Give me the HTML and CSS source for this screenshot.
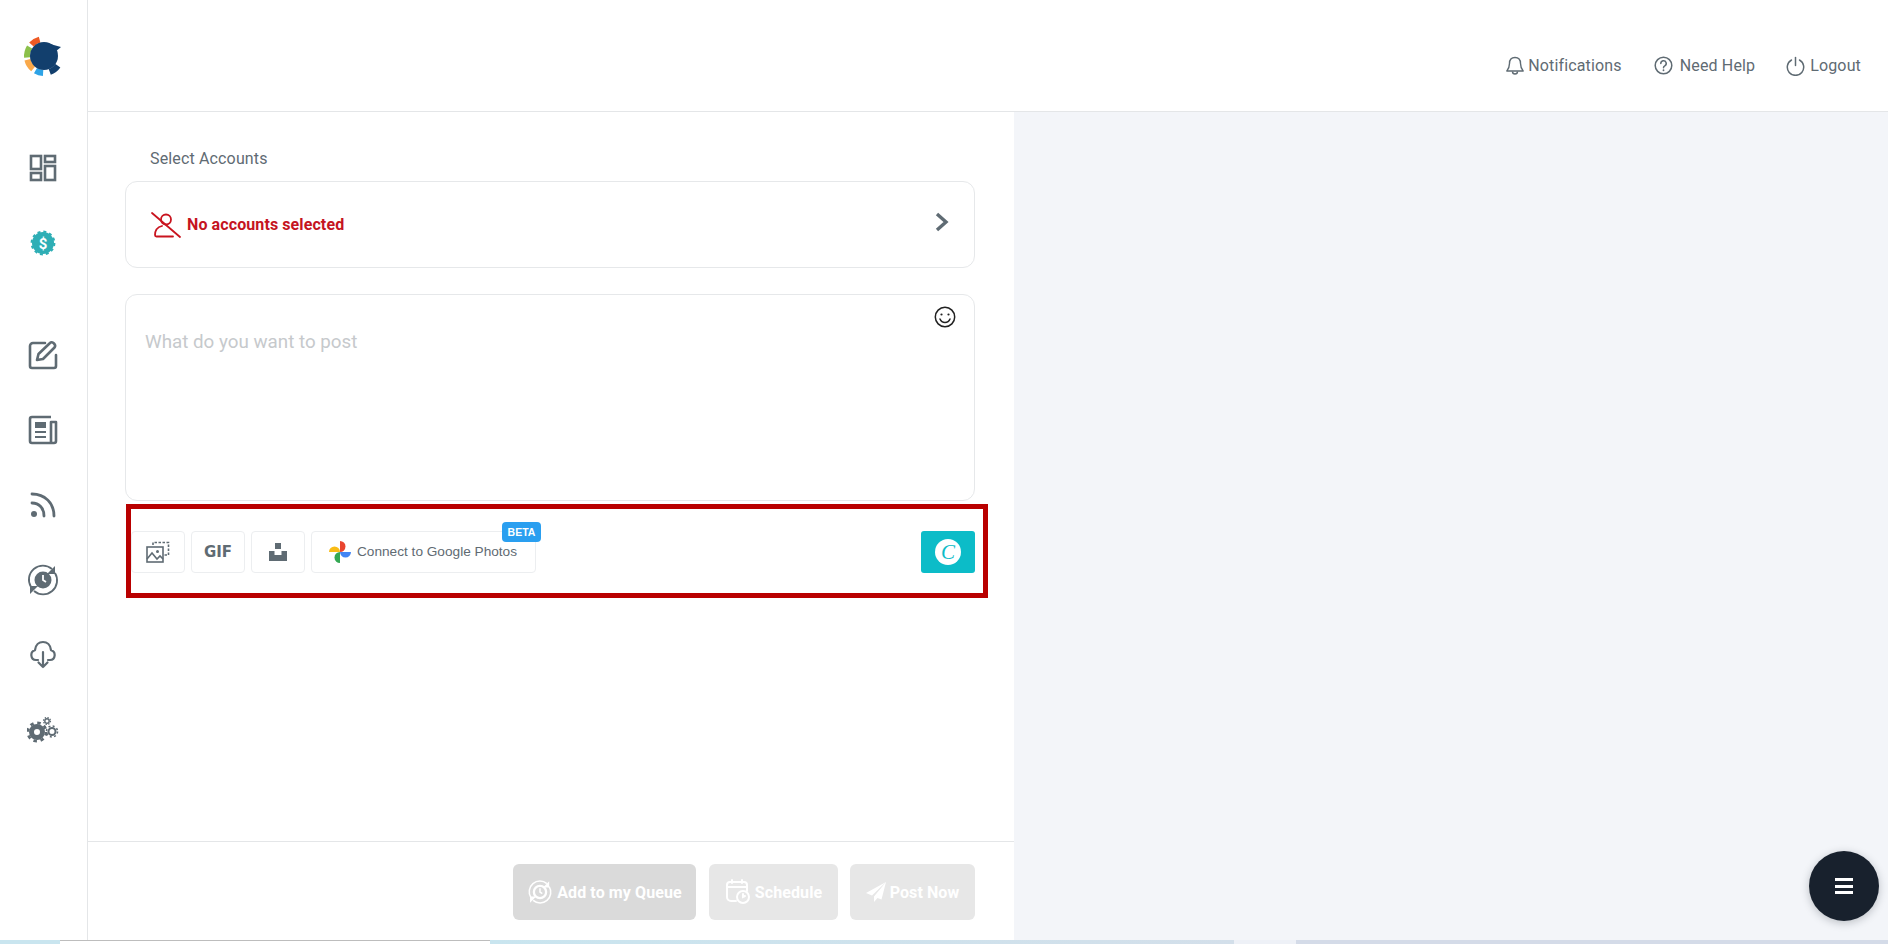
FILE: index.html
```html
<!DOCTYPE html>
<html lang="en">
<head>
<meta charset="utf-8">
<title>Composer</title>
<link rel="stylesheet" href="styles.css">
</head>
<body>
<div class="app">
  <aside class="sidebar">
    <div class="logo">
      <svg width="40" height="44" viewBox="0 0 40 44" fill="none" stroke-width="6">
        <path d="M9.400 10.600A17 17 0 0 1 17.600 5.600" stroke="#ee5a24"/>
        <path d="M7.600 13A17 17 0 0 0 5.100 23.500" stroke="#8cc04a"/>
        <path d="M5.400 25.800A17 17 0 0 0 11.100 35" stroke="#f9a94a"/>
        <path d="M13.500 36.700A17 17 0 0 0 21.100 39" stroke="#2ea3e6"/>
        <path d="M27.800 38A17 17 0 0 0 35.900 31.800" stroke="#123f6d"/>
        <circle cx="22" cy="22" r="14" fill="#123f6d"/>
        <path d="M28 10L39 13L33 18Z" fill="#123f6d"/>
      </svg>
    </div>
    <nav class="nav nav-top">
      <a class="nav-item">
        <svg width="28" height="28" viewBox="0 0 28 28" fill="none" stroke="#5f6b73" stroke-width="2.600"><rect x="2" y="2" width="10" height="13"/><rect x="16" y="2" width="10" height="6"/><rect x="2" y="19" width="10" height="7"/><rect x="16" y="12" width="10" height="14"/></svg>
      </a>
      <a class="nav-item">
        <svg width="26" height="26" viewBox="0 0 26 26"><circle cx="13" cy="13" r="11" fill="#2eaeb5"/><circle cx="13" cy="13" r="11.400" fill="none" stroke="#2eaeb5" stroke-width="2" stroke-dasharray="3 2.970"/><text class="badge-dollar" x="13" y="18.500" text-anchor="middle">$</text></svg>
      </a>
    </nav>
    <nav class="nav nav-bottom">
      <a class="nav-item">
        <svg width="30" height="30" viewBox="0 0 30 30" fill="none" stroke="#5f6b73" stroke-width="2.600" stroke-linecap="round" stroke-linejoin="round"><path d="M17 3H5a3 3 0 0 0-3 3v20a2 2 0 0 0 2 2h22a2 2 0 0 0 2-2V15"/><path d="M9 20l1.500-6L22 3c1-1 2.500-1 4 .5s1.500 3 .5 4L15 19z"/></svg>
      </a>
      <a class="nav-item">
        <svg width="30" height="30" viewBox="0 0 30 30" fill="none" stroke="#5f6b73" stroke-width="2.600" stroke-linejoin="round"><path d="M23 2H4a2 2 0 0 0-2 2v22a2 2 0 0 0 2 2h22a2 2 0 0 0 2-2V7h-5v21"/><rect x="7" y="7" width="11" height="6" fill="#5f6b73" stroke="none"/><path d="M7 17h11M7 22h11" stroke-width="2.200"/></svg>
      </a>
      <a class="nav-item">
        <svg width="28" height="28" viewBox="0 0 28 28" fill="none" stroke="#5f6b73" stroke-width="2.800" stroke-linecap="round"><circle cx="5" cy="23" r="3" fill="#5f6b73" stroke="none"/><path d="M3 12c7 0 12 5 12 13"/><path d="M3 3c13 0 22 9 22 22"/></svg>
      </a>
      <a class="nav-item">
        <svg width="32" height="34" viewBox="0 0 32 34" fill="none" stroke="#5f6b73" stroke-width="1.800"><path d="M4 24A14 14 0 0 1 25 6"/><path d="M28 10A14 14 0 0 1 7 28"/><path d="M28 3v8h-8zM3 31v-8h8z" fill="#5f6b73" stroke="none"/><circle cx="16" cy="17" r="8.500" fill="#5f6b73" stroke="none"/><path d="M16 12v5l3 2" stroke="#fff" stroke-width="1.800"/></svg>
      </a>
      <a class="nav-item">
        <svg width="26" height="30" viewBox="0 0 26 30" fill="none" stroke="#5f6b73" stroke-width="2.200" stroke-linecap="round" stroke-linejoin="round"><path d="M8 20H6a5 5 0 0 1-1-9.800C5.500 5 9 2 13 2s7.500 3 8 8.200A5 5 0 0 1 20 20h-2"/><path d="M13 12v15M8.500 22.500L13 27l4.500-4.500"/></svg>
      </a>
      <a class="nav-item">
        <svg width="32" height="26" viewBox="0 0 32 26" fill="none" stroke="#5f6b73"><circle cx="10" cy="15" r="5.500" stroke-width="5"/><circle cx="10" cy="15" r="9.200" stroke-width="2.800" stroke-dasharray="3.500 3.720"/><circle cx="25" cy="14.500" r="3.500" stroke-width="2"/><circle cx="25" cy="14.500" r="5.500" stroke-width="1.600" stroke-dasharray="2 2.320"/><circle cx="20" cy="4" r="2.200" stroke-width="1.400"/><circle cx="20" cy="4" r="3.500" stroke-width="1.200" stroke-dasharray="1.400 1.350"/></svg>
      </a>
    </nav>
  </aside>
  <div class="main">
    <header class="topbar">
      <a class="top-link top-notify">
        <svg width="18" height="20" viewBox="0 0 18 20" fill="none" stroke="#5f6b73" stroke-width="1.400" stroke-linejoin="round"><path d="M9 1.500c-3.500 0-5.500 2.600-5.500 6 0 4-1.200 5.500-2.700 7.500h16.400c-1.500-2-2.700-3.500-2.700-7.500 0-3.400-2-6-5.500-6z"/><path d="M6.500 15.500a2.500 2.500 0 0 0 5 0"/></svg>
        <span>Notifications</span>
      </a>
      <a class="top-link top-help">
        <svg width="19" height="19" viewBox="0 0 19 19" fill="none" stroke="#5f6b73" stroke-width="1.500" stroke-linecap="round"><circle cx="9.500" cy="9.500" r="8.300"/><path d="M6.800 7.500a2.700 2.700 0 1 1 4 2.300c-.9.500-1.300 1-1.300 1.900"/><path d="M9.500 14.200v.1" stroke-width="1.800"/></svg>
        <span>Need Help</span>
      </a>
      <a class="top-link top-logout">
        <svg width="19" height="20" viewBox="0 0 19 20" fill="none" stroke="#5f6b73" stroke-width="1.500" stroke-linecap="round"><path d="M5.500 4a8.200 8.200 0 1 0 8 0"/><path d="M9.500 1.500v8"/></svg>
        <span>Logout</span>
      </a>
    </header>
    <div class="workspace">
      <section class="editor">
        <div class="editor-body">
          <div class="field-label">Select Accounts</div>
          <div class="accounts-card">
            <svg class="no-user" width="30" height="26" viewBox="0 0 30 26" fill="none" stroke="#c9141f" stroke-width="1.800" stroke-linecap="round"><path d="M1 1l28 24"/><circle cx="15" cy="7.500" r="5"/><path d="M11 14c-4 1-7 4-7 9 0 1 .5 1.500 1.500 1.500H22"/></svg>
            <span class="no-accounts">No accounts selected</span>
            <svg class="chevron" width="14" height="20" viewBox="0 0 14 20" fill="none" stroke="#5f6b73" stroke-width="3.400"><path d="M2 2l9 8-9 8"/></svg>
          </div>
          <div class="composer">
            <div class="placeholder">What do you want to post</div>
            <svg class="smiley" width="22" height="22" viewBox="0 0 22 22" fill="none" stroke="#222" stroke-width="1.500" stroke-linecap="round"><circle cx="11" cy="11" r="9.700"/><circle cx="7.500" cy="8.500" r="1.100" fill="#222" stroke="none"/><circle cx="14.500" cy="8.500" r="1.100" fill="#222" stroke="none"/><path d="M6 13c1 2.500 3 3.500 5 3.500s4-1 5-3.500"/></svg>
          </div>
          <div class="toolbar">
            <button class="tool tool-square">
              <svg width="24" height="22" viewBox="0 0 24 22" fill="none" stroke="#5f6b73" stroke-width="1.600"><path d="M7 4V1.500h15.500V14H18" stroke-dasharray="2.500 1.500"/><rect x="1" y="6" width="16" height="15"/><circle cx="11.500" cy="10.500" r="1.500" fill="#5f6b73" stroke="none"/><path d="M1 18l5-6 5 6 3-3 3 3"/></svg>
            </button>
            <button class="tool tool-square"><span class="gif">GIF</span></button>
            <button class="tool tool-square">
              <svg width="18" height="18" viewBox="0 0 18 18" fill="#5f6b73"><path d="M6 0h6v6H6zM0 8h5.500v4h7V8H18v10H0z"/></svg>
            </button>
            <button class="tool tool-google">
              <svg width="22" height="22" viewBox="0 0 22 22"><path d="M0 11A5.500 5.500 0 0 1 11 11Z" fill="#f9bc15"/><path d="M11 0A5.500 5.500 0 0 1 11 11Z" fill="#e9452f"/><path d="M22 11A5.500 5.500 0 0 1 11 11Z" fill="#4285f4"/><path d="M11 22A5.500 5.500 0 0 1 11 11Z" fill="#34a853"/></svg>
              <span class="google-label">Connect to Google Photos</span>
              <span class="beta">BETA</span>
            </button>
            <button class="canva"><span class="canva-dot">C</span></button>
          </div>
          <div class="annotation"></div>
        </div>
        <footer class="actions">
          <button class="action action-primary">
            <svg width="26" height="26" viewBox="0 0 32 34" fill="none" stroke="#fff" stroke-width="2"><path d="M4 24A14 14 0 0 1 25 6"/><path d="M28 10A14 14 0 0 1 7 28"/><path d="M28 3v8h-8zM3 31v-8h8z" fill="#fff" stroke="none"/><circle cx="16" cy="17" r="8" stroke-width="3"/><path d="M16 12v5l3 2"/></svg>
            <span>Add to my Queue</span>
          </button>
          <button class="action action-schedule">
            <svg width="26" height="26" viewBox="0 0 26 26" fill="none" stroke="#fff" stroke-width="2" stroke-linecap="round"><path d="M11 22H6a4 4 0 0 1-4-4V6a3 3 0 0 1 3-3h14a3 3 0 0 1 3 3v6"/><path d="M2 8h20M7 1v3M17 1v3"/><circle cx="18" cy="18" r="6"/><path d="M18 15v3l2-1"/></svg>
            <span>Schedule</span>
          </button>
          <button class="action action-post">
            <svg width="20" height="20" viewBox="0 0 20 20" fill="#fff"><path d="M20 0L0 11l6 2.500zM20 0L8 14.500V20l3.500-4 4 1.500z"/></svg>
            <span>Post Now</span>
          </button>
        </footer>
      </section>
      <section class="preview"></section>
    </div>
  </div>
</div>
<div class="strip">
  <div class="strip-a"></div>
  <div class="strip-b"></div>
  <div class="strip-c"></div>
  <div class="strip-d"></div>
  <div class="strip-e"></div>
</div>
<button class="fab" aria-label="Menu"><span class="fab-lines"></span></button>
</body>
</html>
```

FILE: styles.css
```css
* { box-sizing: border-box; }
html, body { margin: 0; height: 100%; }
body {
  width: 1888px;
  height: 944px;
  overflow: hidden;
  display: flex;
  flex-direction: column;
  position: relative;
  background: #fff;
  font-family: Roboto, "Liberation Sans", sans-serif;
  color: #5f6b73;
}
svg { display: block; flex: none; }
button { font-family: inherit; cursor: pointer; }

.app { display: flex; height: 940px; }

.sidebar {
  width: 88px;
  flex: none;
  border-right: 1px solid #e4e6e8;
  padding-right: 1px;
  display: flex;
  flex-direction: column;
  align-items: center;
}
.logo { height: 111px; display: flex; align-items: center; justify-content: center; width: 100%; padding-right: 2px; }
.nav { display: flex; flex-direction: column; width: 100%; }
.nav-top { margin-top: 19.500px; }
.nav-bottom { margin-top: 37px; }
.nav-item { height: 75px; display: flex; align-items: center; justify-content: center; }
.badge-dollar { font: 700 15px Roboto, sans-serif; fill: #fff; }

.main { flex: 1; display: flex; flex-direction: column; min-width: 0; }

.topbar {
  height: 112px;
  flex: none;
  border-bottom: 1px solid #e4e6e8;
  display: flex;
  align-items: center;
  justify-content: flex-end;
  padding: 20px 27px 0 0;
}
.top-link { display: flex; align-items: center; font-size: 16px; line-height: 20px; letter-spacing: 0.150px; }
.top-notify { gap: 4px; }
.top-help { gap: 7px; margin-left: 32px; }
.top-logout { gap: 5px; margin-left: 31px; }

.workspace { flex: 1; display: flex; min-height: 0; }

.editor { width: 926px; flex: none; display: flex; flex-direction: column; }
.editor-body { flex: 1; position: relative; padding: 35px 39px 0 37px; }

.field-label { height: 24px; line-height: 24px; margin-left: 25px; font-size: 16px; letter-spacing: 0.150px; }

.accounts-card {
  margin-top: 10px;
  height: 87px;
  border: 1px solid #e6e8ea;
  border-radius: 12px;
  display: flex;
  align-items: center;
  padding: 0 25px 0 25px;
}
.no-accounts { margin-left: 6px; font-size: 16px; font-weight: 700; letter-spacing: 0.100px; color: #c5141f; }
.chevron { margin-left: auto; margin-top: -6px; }

.composer {
  margin-top: 26px;
  height: 207px;
  border: 1px solid #e6e8ea;
  border-radius: 12px;
  padding: 35px 18px 0 19px;
  display: flex;
  justify-content: space-between;
  align-items: flex-start;
}
.placeholder { font-size: 18.800px; line-height: 24px; color: #c6c9cc; }
.smiley { margin-top: -24px; }

.toolbar { margin-top: 30px; margin-left: 6px; height: 42px; display: flex; gap: 6px; }
.tool {
  height: 42px;
  padding: 0;
  background: #fff;
  border: 1px solid #eceef0;
  border-radius: 4px;
  display: flex;
  align-items: center;
  justify-content: center;
  color: #5f6b73;
}
.tool-square { width: 54px; }
.gif { font: 700 15px "DejaVu Sans", sans-serif; letter-spacing: 0; color: #5f6b73; }
.tool-google {
  position: relative;
  width: 225px;
  gap: 6px;
  justify-content: flex-start;
  padding-left: 17px;
  font: 13.650px "Liberation Sans", sans-serif;
}
.google-label { margin-top: -2px; }
.beta {
  position: absolute;
  top: -10px;
  right: -6px;
  width: 39px;
  height: 20px;
  border-radius: 4px;
  background: #2a9ff0;
  color: #fff;
  font: 700 10.500px/20px "Liberation Sans", sans-serif;
  text-align: center;
}
.canva {
  margin-left: auto;
  width: 54px;
  height: 42px;
  padding: 0;
  border: 0;
  border-radius: 3px;
  background: #0cbcc8;
  display: flex;
  align-items: center;
  justify-content: center;
}
.canva-dot {
  width: 26px;
  height: 26px;
  border-radius: 50%;
  background: #fff;
  color: #0cbcc8;
  font: italic 21px/26px "Liberation Serif", serif;
  text-align: center;
}
.annotation {
  position: absolute;
  left: 38px;
  top: 392px;
  width: 862px;
  height: 94px;
  border: 5px solid #b90000;
  pointer-events: none;
}

.actions {
  height: 99px;
  flex: none;
  border-top: 1px solid #e4e6e8;
  display: flex;
  justify-content: flex-end;
  padding: 22px 39px 0 0;
  gap: 12px;
}
.action {
  height: 56px;
  border: 0;
  border-radius: 6px;
  background: #e7e7e7;
  color: #fff;
  display: flex;
  align-items: center;
  justify-content: center;
  gap: 4px;
  font-size: 16px;
  font-weight: 700;
  letter-spacing: 0.100px;
  padding: 0;
}
.action-primary { width: 183px; background: #dadada; margin-right: 1px; }
.action-schedule { width: 129px; }
.action-post { width: 125px; }

.preview { flex: 1; background: #f3f5f9; }

.strip { height: 4px; display: flex; flex: none; }
.strip-a { width: 60px; background: #c9e5ef; }
.strip-b { width: 430px; background: #fff; border-top: 1px solid #bdbdbd; }
.strip-c { width: 744px; background: linear-gradient(90deg, #c9e5ef, #d3dfea); }
.strip-d { width: 62px; background: #eef1f7; }
.strip-e { flex: 1; background: #d4dbe8; }

.fab {
  position: absolute;
  left: 1809px;
  top: 851px;
  width: 70px;
  height: 70px;
  padding: 0;
  border: 0;
  border-radius: 50%;
  background: #18212d;
  box-shadow: 0 2px 8px rgba(24, 33, 45, .25);
  display: flex;
  align-items: center;
  justify-content: center;
}
.fab-lines {
  width: 18px;
  height: 16px;
  border-top: 3px solid #fff;
  border-bottom: 3px solid #fff;
  background: linear-gradient(#fff, #fff) center / 100% 3px no-repeat;
}
```
